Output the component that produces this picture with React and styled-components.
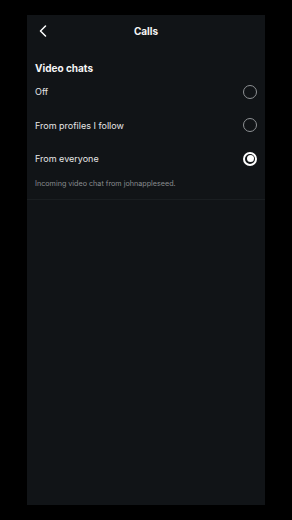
import React, { useState } from 'react'
import styled, { createGlobalStyle } from 'styled-components'

const Global = createGlobalStyle`
  html, body {
    margin: 0;
    padding: 0;
    background: #000;
  }
  body {
    font-family: Inter, "Noto Sans", sans-serif;
    -webkit-font-smoothing: antialiased;
  }
`

const Screen = styled.div`
  width: 292px;
  height: 520px;
  padding: 15px 27px 0 27px;
  box-sizing: border-box;
`

const Panel = styled.div`
  width: 238px;
  height: 490px;
  background: #111417;
  display: flex;
  flex-direction: column;
`

const Header = styled.header`
  height: 32px;
  display: grid;
  grid-template-columns: 32px 1fr 32px;
  align-items: center;
`

const BackButton = styled.button`
  background: none;
  border: 0;
  padding: 0 0 0 12px;
  height: 32px;
  display: flex;
  align-items: center;
  cursor: pointer;
`

const Title = styled.h1`
  margin: 0;
  text-align: center;
  color: #f5f5f5;
  font-size: 10px;
  font-weight: 700;
`

const Section = styled.section`
  padding: 14px 0 9px;
  border-bottom: 1px solid #1a1e21;
`

const SectionTitle = styled.h2`
  margin: 0 0 0 8px;
  height: 14px;
  line-height: 14px;
  color: #f5f5f5;
  font-size: 10px;
  font-weight: 700;
`

const Row = styled.label`
  display: flex;
  align-items: center;
  justify-content: space-between;
  height: 33.5px;
  padding: 0 8px;
  cursor: pointer;
`

const RowText = styled.span`
  color: #e6e6e6;
  font-size: 9px;
`

const Radio = styled.span`
  width: 14px;
  height: 14px;
  box-sizing: border-box;
  border-radius: 50%;
  border: ${(p) => (p.$checked ? '2px solid #fff' : '1px solid #8e9194')};
  display: flex;
  align-items: center;
  justify-content: center;
  &::after {
    content: '';
    width: 7px;
    height: 7px;
    border-radius: 50%;
    background: #fff;
    display: ${(p) => (p.$checked ? 'block' : 'none')};
  }
`

const Caption = styled.p`
  margin: 2px 8px 0;
  color: #8a8d90;
  font-size: 7.2px;
  line-height: 12px;
`

const options = ['Off', 'From profiles I follow', 'From everyone']

const Chevron = () => (
  <svg width="8" height="12" viewBox="0 0 8 12" fill="none">
    <path d="M6.5 1 L1.5 6 L6.5 11" stroke="#fff" strokeWidth="1.5" strokeLinecap="round" strokeLinejoin="round" />
  </svg>
)

export default function App() {
  const [value, setValue] = useState(2)
  return (
    <Screen>
      <Global />
      <Panel>
        <Header>
          <BackButton aria-label="Back">
            <Chevron />
          </BackButton>
          <Title>Calls</Title>
          <span />
        </Header>
        <Section>
          <SectionTitle>Video chats</SectionTitle>
          {options.map((o, i) => (
            <Row key={o} onClick={() => setValue(i)}>
              <RowText>{o}</RowText>
              <Radio $checked={value === i} />
            </Row>
          ))}
          <Caption>Incoming video chat from johnappleseed.</Caption>
        </Section>
      </Panel>
    </Screen>
  )
}
